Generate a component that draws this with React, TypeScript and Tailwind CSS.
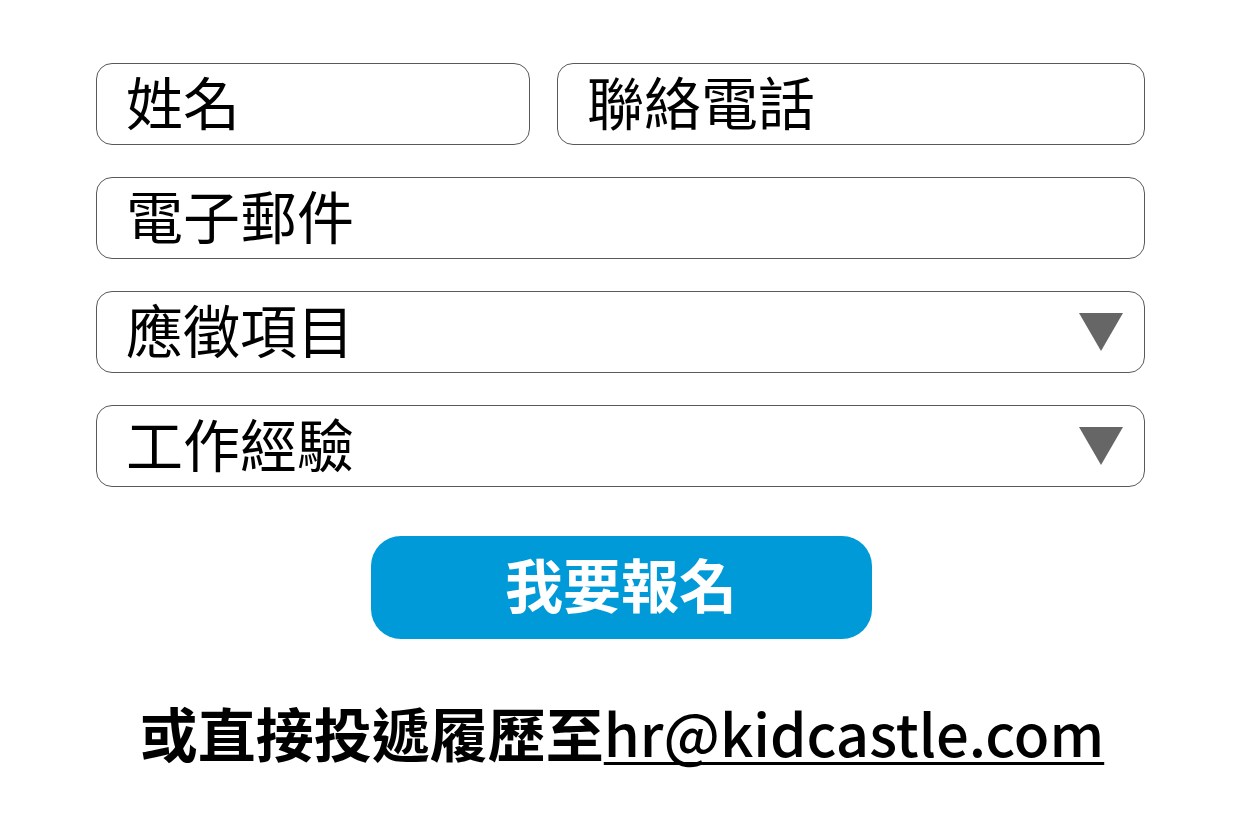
import React from "react";

const font = { fontFamily: '"Noto Sans CJK TC", "Noto Sans", sans-serif' };

const Field = ({ label, select, className }: { label: string; select?: boolean; className?: string }) => (
  <div
    className={`h-[82px] border border-[#595959] rounded-[16px] bg-white flex items-center pl-[29px] pr-[21px] ${className ?? ""}`}
  >
    <span className="flex-1 text-[57px] leading-none text-black -mt-[8px]">{label}</span>
    {select && (
      <svg width="44" height="38" viewBox="0 0 44 38">
        <polygon points="0,0 44,0 22,38" fill="#666666" />
      </svg>
    )}
  </div>
);

export default function App() {
  return (
    <div className="w-[1242px] h-[818px] bg-white" style={font}>
      <div className="w-[1049px] ml-[96px] pt-[63px] flex flex-col gap-[32px]">
        <div className="flex gap-[27px]">
          <Field label="姓名" className="w-[434px]" />
          <Field label="聯絡電話" className="flex-1" />
        </div>
        <Field label="電子郵件" />
        <Field label="應徵項目" select />
        <Field label="工作經驗" select />
      </div>
      <div className="flex justify-center mt-[49px]">
        <button className="w-[501px] h-[103px] rounded-[30px] bg-[#009ad9] text-white text-[58px] font-bold leading-none pb-[10px]">
          我要報名
        </button>
      </div>
      <div className="flex justify-center mt-[57px] pl-[2px]">
        <p className="text-[58px] leading-[72px] text-black whitespace-nowrap">
          <span className="font-bold">或直接投遞履歷至</span>
          <a
            href="#"
            className="font-medium underline decoration-[3px] underline-offset-[5px] [text-decoration-skip-ink:none]"
          >
            hr@kidcastle.com
          </a>
        </p>
      </div>
    </div>
  );
}
